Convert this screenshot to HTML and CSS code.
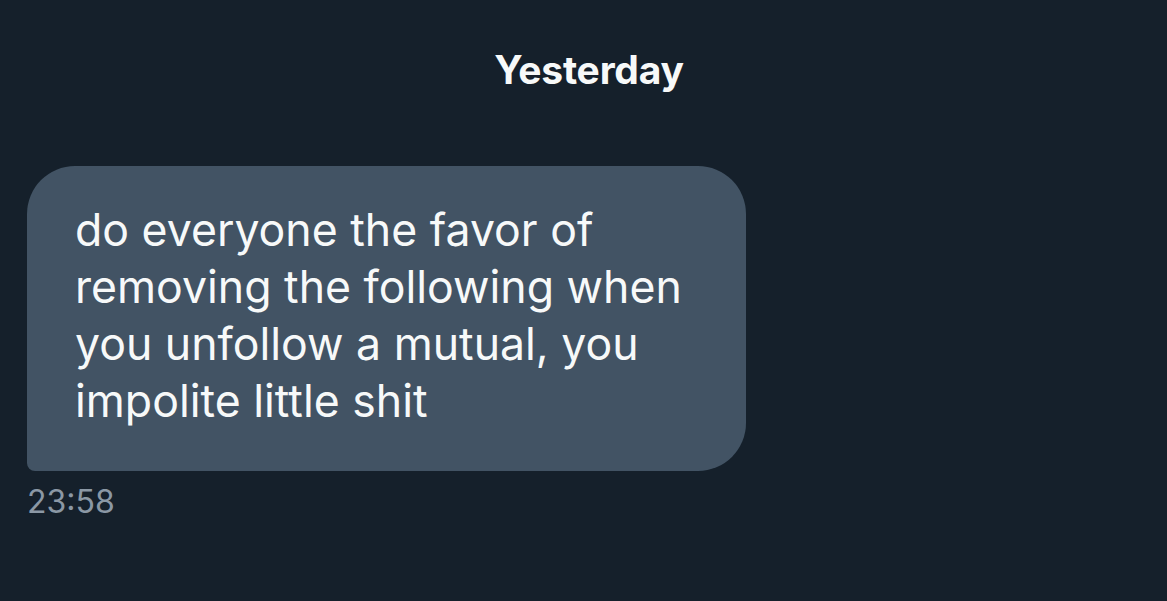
FILE: index.html
```html
<!DOCTYPE html>
<html>
<head>
<meta charset="utf-8">
<link rel="stylesheet" href="styles.css">
</head>
<body>
<div class="chat">
  <div class="day">Yesterday</div>
  <div class="msg">
    <div class="bubble">do everyone the favor of removing the following when you unfollow a mutual, you impolite little shit</div>
    <div class="time">23:58</div>
  </div>
</div>
</body>
</html>
```
FILE: styles.css
```css
html, body {
  margin: 0;
  padding: 0;
  background: #15202b;
  height: 100%;
}
body {
  font-family: Inter, "Noto Sans", sans-serif;
  color: #f7f9f9;
}
.chat {
  display: flex;
  flex-direction: column;
  padding: 0 27px;
}
.day {
  text-align: center;
  font-weight: 700;
  font-size: 39px;
  line-height: 46px;
  padding-top: 47px;
  padding-left: 11px;
  letter-spacing: -0.2px;
}
.msg {
  margin-top: 73px;
  display: flex;
  flex-direction: column;
  align-items: flex-start;
}
.bubble {
  width: 719px;
  box-sizing: border-box;
  background: #425364;
  border-radius: 48px 48px 48px 8px;
  padding: 36px 44px 41px 48px;
  font-size: 44.6px;
  line-height: 57px;
}
.time {
  margin-top: 11px;
  color: #8b98a5;
  font-size: 32px;
  line-height: 40px;
}
```
